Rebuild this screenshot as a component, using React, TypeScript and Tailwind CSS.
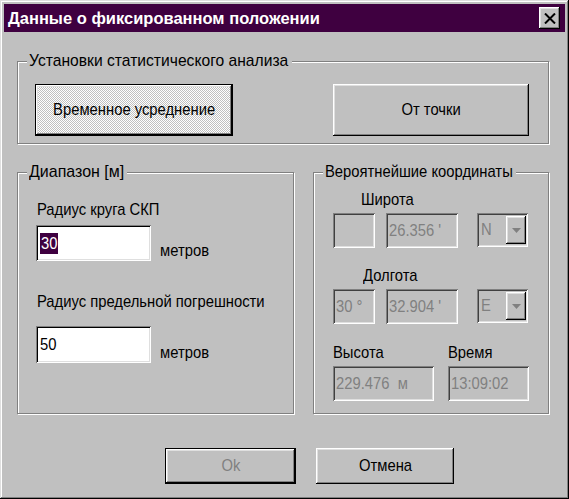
import React from 'react';

const raised =
  'shadow-[inset_-1px_-1px_#000,inset_1px_1px_#fff,inset_-2px_-2px_#808080,inset_2px_2px_#dfdfdf]';
const sunken =
  'shadow-[inset_1px_1px_#808080,inset_-1px_-1px_#fff,inset_2px_2px_#000,inset_-2px_-2px_#dfdfdf]';
const sunkenOff =
  'shadow-[inset_1px_1px_#808080,inset_-1px_-1px_#fff,inset_2px_2px_#404040,inset_-2px_-2px_#dfdfdf]';
const font = "font-['Liberation_Sans',Arial,sans-serif]";

// narrow system-font look: squeeze the glyphs horizontally
const T: React.FC<{ children: React.ReactNode; center?: boolean; className?: string }> = ({
  children,
  center,
  className = 'scale-x-[0.87]',
}) => (
  <span className={`inline-block whitespace-pre ${center ? 'origin-center' : 'origin-left'} ${className}`}>
    {children}
  </span>
);

const Group: React.FC<{ title: string; squeeze: string; className?: string; children: React.ReactNode }> = ({
  title,
  squeeze,
  className = '',
  children,
}) => (
  <fieldset
    className={`m-0 min-w-0 p-0 border border-[#808080] shadow-[inset_1px_1px_#fff,1px_1px_#fff] ${className}`}
  >
    <legend className="ml-[9px] pl-[2px] pr-[3px] h-[20px] leading-[20px] text-[17px] text-black bg-[#c0c0c0]">
      <T className={squeeze}>{title}</T>
    </legend>
    {children}
  </fieldset>
);

const Label: React.FC<{ className?: string; children: React.ReactNode }> = ({ className = '', children }) => (
  <div className={`h-[20px] leading-[20px] text-[17px] whitespace-nowrap ${className}`}>
    <T>{children}</T>
  </div>
);

const Field: React.FC<{ className: string; children?: React.ReactNode }> = ({ className, children }) => (
  <div
    className={`h-[35px] flex items-center pl-[3px] text-[17px] text-[#808080] bg-[#c0c0c0] overflow-hidden ${sunkenOff} ${className}`}
  >
    {children && <T>{children}</T>}
  </div>
);

const Combo: React.FC<{ value: string }> = ({ value }) => (
  <div className={`w-[51px] h-[34px] flex items-center p-[2px] bg-[#c0c0c0] ${sunkenOff}`}>
    <span className="flex-1 pl-[2px] text-[17px] text-[#808080]">
      <T>{value}</T>
    </span>
    <div className={`w-[20px] h-[28px] flex items-center justify-center ${raised}`}>
      <svg width="9" height="5" viewBox="0 0 9 5">
        <path d="M0 0h9L4.5 5z" fill="#808080" />
      </svg>
    </div>
  </div>
);

export default function App() {
  return (
    <div
      className={`w-[569px] h-[499px] p-[4px] bg-[#c0c0c0] flex flex-col ${font} shadow-[inset_-1px_-1px_#000,inset_1px_1px_#dfdfdf,inset_-2px_-2px_#808080,inset_2px_2px_#fff]`}
    >
      <div className="h-[28px] bg-[#3f0040] flex items-center justify-between pl-[4px] pr-[5px]">
        <span className="font-bold text-[16.5px] text-white whitespace-nowrap">
          Данные о фиксированном положении
        </span>
        <button className={`w-[21px] h-[22px] bg-[#c0c0c0] flex items-center justify-center ${raised}`}>
          <svg width="12" height="11" viewBox="0 0 12 11">
            <path d="M1 0.5L11 10.5M11 0.5L1 10.5" stroke="#000" strokeWidth="2" />
          </svg>
        </button>
      </div>

      <Group
        title="Установки статистического анализа"
        squeeze="scale-x-[0.92] -mr-[22px]"
        className="mt-[19px] ml-[13px] w-[532px] h-[93px]"
      >
        <div className="mt-[13px] flex justify-between pl-[17px] pr-[19px]">
          <button
            className={`w-[198px] h-[52px] border border-black text-[17px] text-black bg-[repeating-conic-gradient(#c0c0c0_0_25%,#fff_0_50%)] bg-[length:2px_2px] ${raised}`}
          >
            <T center>Временное усреднение</T>
          </button>
          <button className={`w-[196px] h-[52px] text-[17px] text-black bg-[#c0c0c0] ${raised}`}>
            <T center>От точки</T>
          </button>
        </div>
      </Group>

      <div className="mt-[18px] ml-[13px] flex gap-[19px]">
        <Group title="Диапазон [м]" squeeze="scale-x-[0.94] -mr-[6px]" className="w-[277px] h-[252px]">
          <Label className="mt-[18px] ml-[19px]">Радиус круга СКП</Label>
          <div className="mt-[5px] ml-[18px] flex items-end gap-[9px]">
            <div className={`w-[115px] h-[36px] bg-white flex items-center pl-[4px] ${sunken}`}>
              <span className="bg-[#3f0040] text-white text-[17px] leading-[21px] px-[1px]">
                <T className="scale-x-[0.87] -mr-[3px]">30</T>
              </span>
            </div>
            <Label>метров</Label>
          </div>
          <Label className="mt-[31px] ml-[19px]">Радиус предельной погрешности</Label>
          <div className="mt-[14px] ml-[18px] flex items-end gap-[9px]">
            <div className={`w-[115px] h-[37px] bg-white flex items-center pl-[4px] ${sunken}`}>
              <span className="text-black text-[17px] leading-[21px]">
                <T>50</T>
              </span>
            </div>
            <Label>метров</Label>
          </div>
        </Group>

        <Group
          title="Вероятнейшие координаты"
          squeeze="scale-x-[0.87] -mr-[28px]"
          className="w-[236px] h-[252px]"
        >
          <Label className="mt-[8px] ml-[47px]">Широта</Label>
          <div className="mt-[3px] ml-[19px] flex items-start">
            <Field className="w-[42px]" />
            <Field className="w-[72px] ml-[11px]">26.356 '</Field>
            <div className="ml-[19px]">
              <Combo value="N" />
            </div>
          </div>
          <Label className="mt-[18px] ml-[49px]">Долгота</Label>
          <div className="mt-[3px] ml-[19px] flex items-start">
            <Field className="w-[42px]">30 °</Field>
            <Field className="w-[72px] ml-[11px]">32.904 '</Field>
            <div className="ml-[19px]">
              <Combo value="E" />
            </div>
          </div>
          <div className="mt-[19px] ml-[19px] flex">
            <Label className="w-[115px]">Высота</Label>
            <Label>Время</Label>
          </div>
          <div className="mt-[3px] ml-[19px] flex">
            <Field className="w-[101px]">229.476  м</Field>
            <Field className="w-[81px] ml-[14px]">13:09:02</Field>
          </div>
        </Group>
      </div>

      <div className="mt-[34px] ml-[161px] flex gap-[20px]">
        <button
          className={`w-[131px] h-[36px] border border-black bg-[#c0c0c0] text-[17px] text-[#808080] ${raised}`}
        >
          <T center>Ok</T>
        </button>
        <button className={`w-[138px] h-[36px] bg-[#c0c0c0] text-[17px] text-black ${raised}`}>
          <T center>Отмена</T>
        </button>
      </div>
    </div>
  );
}
